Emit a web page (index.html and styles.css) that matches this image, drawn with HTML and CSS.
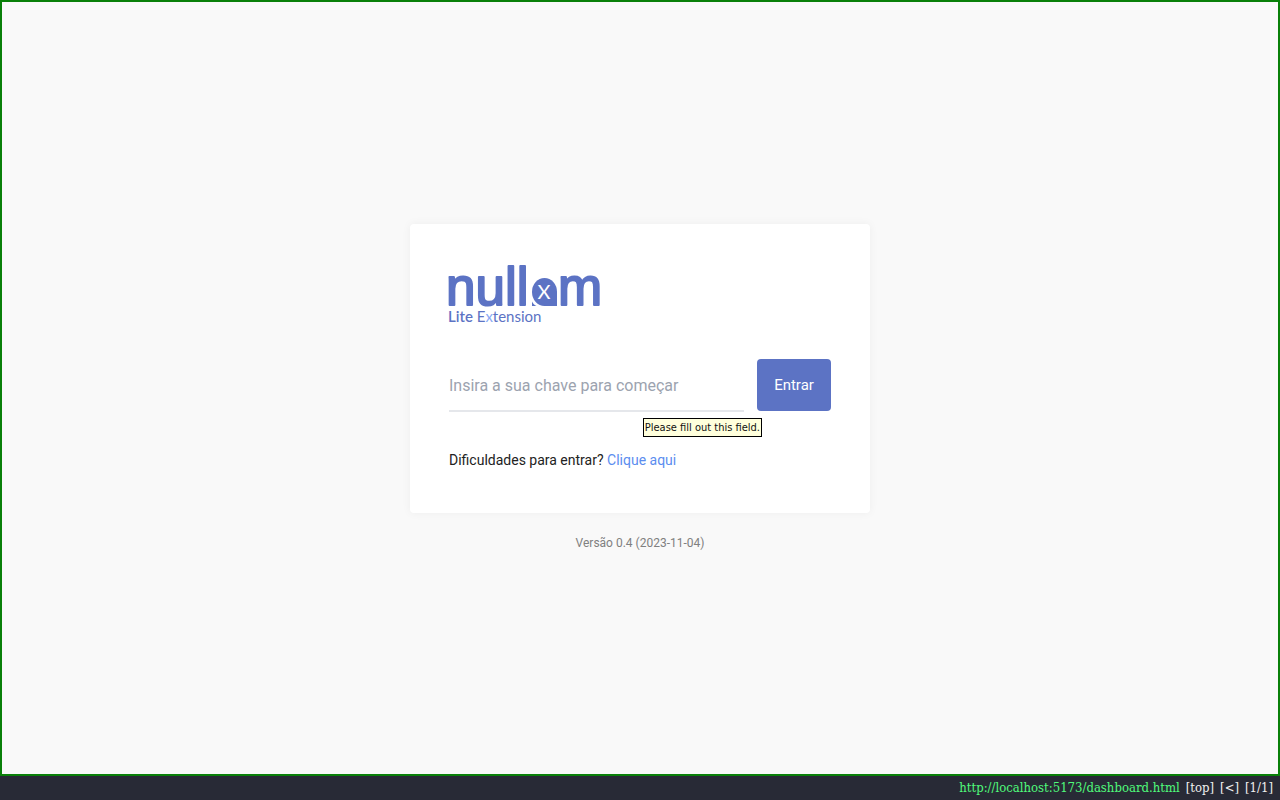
FILE: index.html
```html
<!DOCTYPE html>
<html lang="pt-BR">
<head>
    <meta charset="UTF-8">
    <meta name="viewport" content="width=device-width, initial-scale=1.0">
    <title>nullam Lite Extension</title>
    <link rel="stylesheet" href="styles.css">
</head>
<body>

    <main class="page">
        <div class="card">
            <svg class="logo" width="170" height="74" viewBox="-4 -10 170 74" role="img" aria-label="nullam Lite Extension">
                <text class="logo-word" x="-3" y="41">null</text>
                <path class="logo-badge" d="M83 28a12.5 14 0 0 1 25 0v14H95.500a12.500 14 0 0 1-12.500-14z"/>
                <path class="logo-badge" d="M83 37.500c1 2 2.500 3.500 4.500 4.500H83z"/>
                <text class="logo-x" x="95" y="35">X</text>
                <text class="logo-word" x="109" y="41">m</text>
                <text class="logo-sub" x="-1" y="58"><tspan class="logo-lite">Lite</tspan> E<tspan class="logo-light">x</tspan>tension</text>
            </svg>

            <form class="key-form">
                <div class="field">
                    <input type="text" id="key" aria-label="Chave" placeholder="Insira a sua chave para começar" required>
                    <span class="tooltip" role="tooltip">Please fill out this field.</span>
                </div>
                <button type="submit">Entrar</button>
            </form>

            <p class="help">Dificuldades para entrar? <a href="#">Clique aqui</a></p>
        </div>
        <p class="version">Versão 0.4 (2023-11-04)</p>
    </main>

    <footer class="statusbar">
        <span class="url">http://localhost:5173/dashboard.html</span>
        <span>[top]</span>
        <span>[&lt;]</span>
        <span>[1/1]</span>
    </footer>

</body>
</html>
```
FILE: styles.css
```css
* {
    box-sizing: border-box;
}
body {
    margin: 0;
    min-height: 100vh;
    display: flex;
    flex-direction: column;
    font-family: Roboto, sans-serif;
    background-color: #f9f9f9;
}
.page {
    flex: 1;
    display: flex;
    flex-direction: column;
    align-items: center;
    justify-content: center;
    border: 2px solid #098009;
}
.card {
    width: 100%;
    max-width: 460px;
    padding: 30px 39px 41px;
    background-color: #fff;
    border-radius: 4px;
    box-shadow: 0 0 10px rgba(0, 0, 0, 0.05);
}
.logo {
    display: block;
    margin: 0 0 31px -4px; /* the drawing has a 4px margin of its own */
    fill: #5c73c4;
}
.logo-word {
    font-family: "Liberation Sans", Arial, sans-serif;
    font-size: 53px;
    stroke: #5c73c4;
    stroke-width: 2px;
    stroke-linejoin: round;
}
.logo-x {
    font-family: Lato, sans-serif;
    font-size: 20px;
    text-anchor: middle;
    fill: #fff;
}
.logo-sub {
    font-family: Lato, sans-serif;
    font-size: 15px;
}
.logo-lite {
    font-weight: 600;
}
.logo-light {
    fill: #8aaaf5;
}
.key-form {
    display: flex;
    gap: 13px;
    margin-bottom: 36px;
}
.field {
    position: relative;
    flex: 1;
}
.field input {
    width: 100%;
    height: 53px;
    padding: 2px 0 0;
    border: none;
    border-bottom: 2px solid #e5e7eb;
    outline: none;
    background: none;
    font-family: inherit;
    font-size: 16px;
    color: #222;
}
.field input::placeholder {
    color: #9ca3af;
}
.tooltip {
    position: absolute;
    top: 59px;
    right: -18px;
    padding: 0 1px;
    border: 1px solid #000;
    background-color: #ffffdc;
    color: #111;
    font-family: "DejaVu Sans Condensed", "DejaVu Sans", sans-serif;
    font-size: 11px;
    line-height: 17px;
    white-space: nowrap;
}
button {
    width: 74px;
    height: 52px;
    padding: 0;
    border: none;
    border-radius: 4px;
    background-color: #5c73c4;
    color: #fff;
    font-family: inherit;
    font-size: 15px;
    cursor: pointer;
}
.help {
    margin: 0;
    font-size: 14px;
    line-height: 24px;
    color: #222;
}
.help a {
    color: #5b8def;
    text-decoration: none;
}
.version {
    margin: 21px 0 0;
    font-size: 12px;
    line-height: 18px;
    color: #808080;
}
.statusbar {
    display: flex;
    justify-content: flex-end;
    gap: 6px;
    padding: 0 7px;
    background-color: #282a36;
    color: #f0f0f0;
    font-family: "DejaVu Serif Condensed", "DejaVu Serif", serif;
    font-size: 13px;
    line-height: 24px;
}
.url {
    color: #50fa7b;
}
```
